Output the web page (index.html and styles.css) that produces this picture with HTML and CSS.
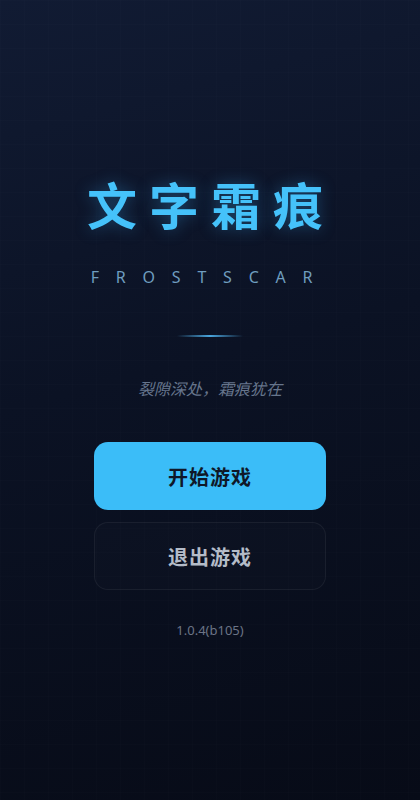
FILE: index.html
```html
<!DOCTYPE html>
<html lang="zh-CN">
<head>
    <meta charset="UTF-8">
    <title>文字霜痕</title>
    <link rel="stylesheet" href="styles.css">
</head>
<body>
    <div class="screen">
        <h1 class="title">文字霜痕</h1>
        <div class="subtitle-en">FROSTSCAR</div>
        <div class="divider"></div>
        <p class="tagline">裂隙深处，霜痕犹在</p>
        <div class="menu">
            <button class="btn btn-start">开始游戏</button>
            <button class="btn btn-exit">退出游戏</button>
        </div>
        <div class="version">1.0.4(b105)</div>
    </div>
</body>
</html>
```

FILE: styles.css
```css
html, body {
    margin: 0;
    padding: 0;
}

body {
    font-family: "Noto Sans", "Noto Sans CJK SC", sans-serif;
    background: linear-gradient(165deg, #111b33 0%, #0b1224 45%, #070b17 100%);
    min-height: 800px;
}

.screen {
    height: 800px;
    display: flex;
    flex-direction: column;
    align-items: center;
    padding-top: 178px;
    box-sizing: border-box;
    background-image:
        linear-gradient(rgba(255, 255, 255, 0.007) 1px, transparent 1px),
        linear-gradient(90deg, rgba(255, 255, 255, 0.007) 1px, transparent 1px);
    background-size: 24px 24px;
}

.title {
    margin: 0;
    font-family: "Noto Sans CJK SC", sans-serif;
    font-size: 50px;
    line-height: 50px;
    font-weight: 700;
    letter-spacing: 12px;
    padding-left: 2px;
    color: #45c2fa;
    text-shadow: 0 0 16px rgba(56, 170, 240, 0.35);
}

.subtitle-en {
    margin-top: 39px;
    font-size: 16px;
    line-height: 20px;
    letter-spacing: 16.8px;
    color: #6f9dbf;
}

.divider {
    margin-top: 48px;
    width: 66px;
    height: 2px;
    background: linear-gradient(90deg, transparent, #4aa6de 50%, transparent);
}

.tagline {
    margin: 42px 0 0;
    font-size: 16px;
    line-height: 20px;
    font-style: italic;
    color: #66758c;
}

.menu {
    margin-top: 43px;
    display: flex;
    flex-direction: column;
    gap: 12px;
}

.btn {
    width: 232px;
    height: 68px;
    border-radius: 14px;
    font-family: "Noto Sans CJK SC", sans-serif;
    font-size: 20px;
    font-weight: 700;
    letter-spacing: 1px;
    cursor: pointer;
}

.btn-start {
    border: none;
    background: #3bbdf8;
    color: #0f1828;
}

.btn-exit {
    border: 1px solid rgba(255, 255, 255, 0.06);
    background: rgba(255, 255, 255, 0.01);
    color: #b4bcc8;
}

.version {
    margin-top: 32px;
    font-size: 13px;
    line-height: 16px;
    color: #6b7486;
}
```
